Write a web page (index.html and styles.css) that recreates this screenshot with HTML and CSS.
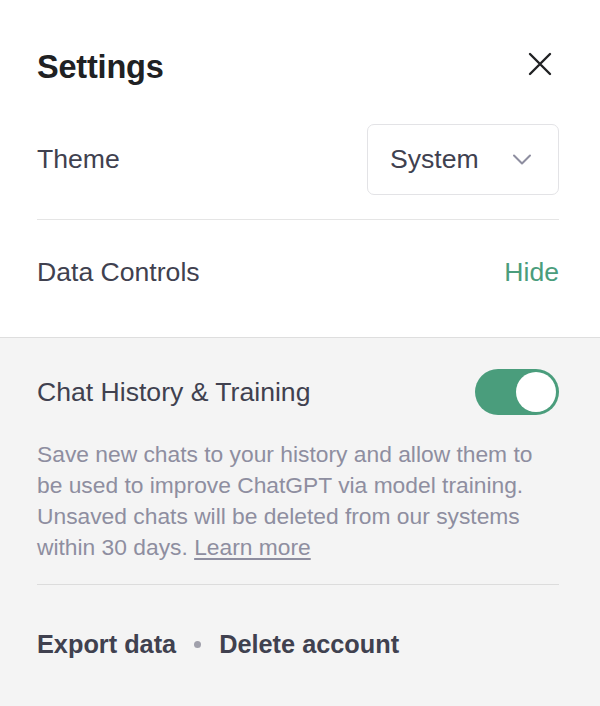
FILE: index.html
```html
<!DOCTYPE html>
<html lang="en">
<head>
<meta charset="utf-8">
<title>Settings</title>
<link rel="stylesheet" href="styles.css">
</head>
<body>
<div class="panel">
  <div class="top">
    <div class="header">
      <h1 class="title">Settings</h1>
      <button class="close" aria-label="Close">
        <svg width="24" height="24" viewBox="0 0 24 24" fill="none" stroke="#202123" stroke-width="2.4" stroke-linecap="round"><path d="M2 2L22 22M22 2L2 22"/></svg>
      </button>
    </div>
    <div class="row theme-row">
      <span class="label">Theme</span>
      <div class="select">
        <span>System</span>
        <svg width="20" height="11" viewBox="0 0 20 11" fill="none" stroke="#8e8ea0" stroke-width="2" stroke-linecap="round" stroke-linejoin="round"><path d="M2 1.5L10 9.5L18 1.5"/></svg>
      </div>
    </div>
    <div class="divider"></div>
    <div class="row data-row">
      <span class="label">Data Controls</span>
      <span class="hide">Hide</span>
    </div>
  </div>
  <div class="bottom">
    <div class="row chat-row">
      <span class="label">Chat History &amp; Training</span>
      <div class="toggle"><div class="knob"></div></div>
    </div>
    <p class="desc">Save new chats to your history and allow them to be used to improve ChatGPT via model training. Unsaved chats will be deleted from our systems within 30 days. <a class="link" href="#">Learn more</a></p>
    <div class="divider divider-gray"></div>
    <div class="actions">
      <span class="action">Export data</span>
      <span class="dot"></span>
      <span class="action">Delete account</span>
    </div>
  </div>
</div>
</body>
</html>
```
FILE: styles.css
```css
* { box-sizing: border-box; }
html, body { margin: 0; padding: 0; }
body {
  font-family: "Liberation Sans", Arial, sans-serif;
  background: #ffffff;
  color: #40414f;
  width: 600px;
  height: 706px;
  overflow: hidden;
}
.panel { display: flex; flex-direction: column; height: 706px; }
.top { padding: 0 41px 0 37px; }
.header {
  margin-top: 47px;
  height: 40px;
  display: flex;
  align-items: center;
  justify-content: space-between;
}
.title {
  margin: 0;
  font-size: 32.5px;
  font-weight: 700;
  color: #202123;
  letter-spacing: -0.2px;
}
.close {
  border: 0;
  background: none;
  padding: 0;
  margin-right: 7px;
  align-self: flex-start;
  margin-top: 5px;
  display: flex;
}
.row { display: flex; align-items: center; justify-content: space-between; }
.label { font-size: 26.6px; color: #40414f; }
.theme-row { margin-top: 37px; height: 71px; }
.select {
  width: 192px;
  height: 71px;
  border: 1px solid #e3e3e6;
  border-radius: 7px;
  display: flex;
  align-items: center;
  justify-content: space-between;
  padding: 0 26px 0 22px;
  font-size: 26.6px;
  color: #40414f;
}
.divider { margin-top: 24px; border-top: 1px solid #e5e5e5; }
.data-row { padding: 26px 0 39px; height: 117px; }
.hide { font-size: 26.6px; color: #4a9d7c; }
.bottom {
  flex: 1;
  background: #f4f4f4;
  border-top: 1px solid #dedede;
  padding: 0 41px 0 37px;
}
.chat-row { margin-top: 31px; height: 46px; }
.toggle {
  width: 84px;
  height: 46px;
  border-radius: 23px;
  background: #4a9d7c;
  display: flex;
  align-items: center;
  justify-content: flex-end;
  padding: 0 3px;
}
.knob { width: 40px; height: 40px; border-radius: 50%; background: #ffffff; }
.desc {
  margin: 24px 0 0;
  font-size: 22.8px;
  line-height: 31px;
  color: #8e8ea0;
}
.link { color: #8e8ea0; text-decoration: underline; text-underline-offset: 3px; }
.divider-gray { margin-top: 21px; border-top-color: #dcdcdc; }
.actions {
  margin-top: 39px;
  height: 40px;
  display: flex;
  align-items: center;
  gap: 18px;
}
.action { font-size: 25.3px; font-weight: 700; color: #40414f; }
.dot { width: 7px; height: 7px; border-radius: 50%; background: #a0a0ab; }
```
